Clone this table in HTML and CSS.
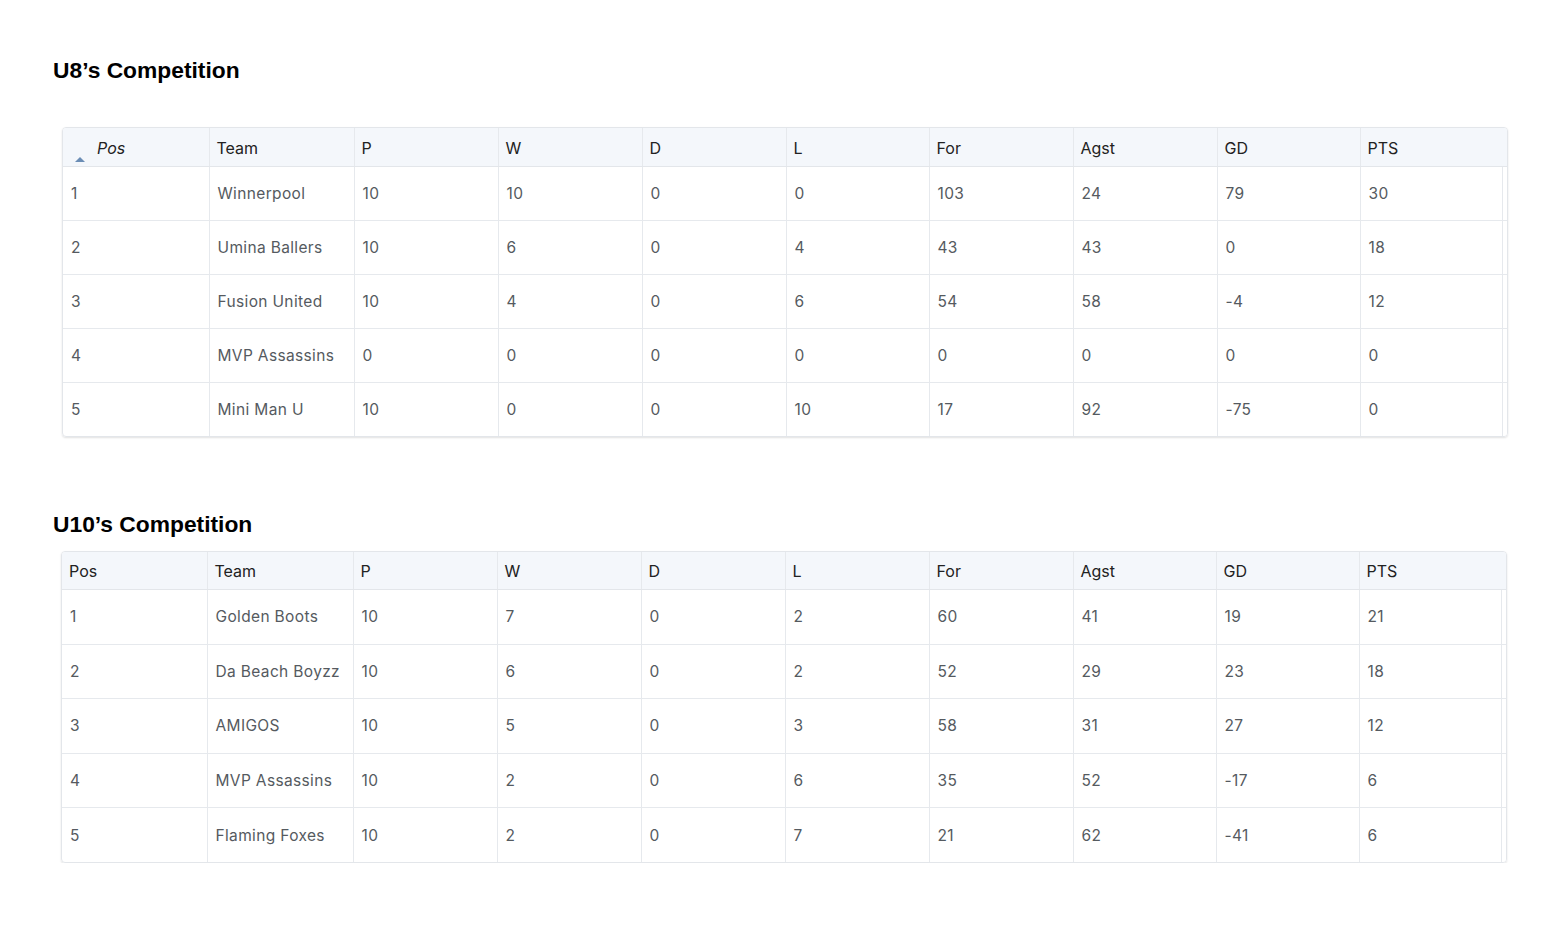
FILE: index.html
```html
<!DOCTYPE html>
<html>
<head>
<meta charset="utf-8">
<link rel="stylesheet" href="styles.css">
</head>
<body>
<main class="page">
  <section class="comp comp-u8">
    <h2 class="title">U8’s Competition</h2>
    <div class="grid-wrap">
      <table class="ladder t1">
        <colgroup><col><col><col><col><col><col><col><col><col><col></colgroup>
        <thead>
          <tr><th class="sorted"><span class="arrow"></span><span class="it">Pos</span></th><th>Team</th><th>P</th><th>W</th><th>D</th><th>L</th><th>For</th><th>Agst</th><th>GD</th><th>PTS</th></tr>
        </thead>
        <tbody>
          <tr><td>1</td><td>Winnerpool</td><td>10</td><td>10</td><td>0</td><td>0</td><td>103</td><td>24</td><td>79</td><td>30</td></tr>
          <tr><td>2</td><td>Umina Ballers</td><td>10</td><td>6</td><td>0</td><td>4</td><td>43</td><td>43</td><td>0</td><td>18</td></tr>
          <tr><td>3</td><td>Fusion United</td><td>10</td><td>4</td><td>0</td><td>6</td><td>54</td><td>58</td><td>-4</td><td>12</td></tr>
          <tr><td>4</td><td>MVP Assassins</td><td>0</td><td>0</td><td>0</td><td>0</td><td>0</td><td>0</td><td>0</td><td>0</td></tr>
          <tr><td>5</td><td>Mini Man U</td><td>10</td><td>0</td><td>0</td><td>10</td><td>17</td><td>92</td><td>-75</td><td>0</td></tr>
        </tbody>
      </table>
    </div>
  </section>

  <section class="comp comp-u10">
    <h2 class="title">U10’s Competition</h2>
    <div class="grid-wrap">
      <table class="ladder t2">
        <colgroup><col><col><col><col><col><col><col><col><col><col></colgroup>
        <thead>
          <tr><th>Pos</th><th>Team</th><th>P</th><th>W</th><th>D</th><th>L</th><th>For</th><th>Agst</th><th>GD</th><th>PTS</th></tr>
        </thead>
        <tbody>
          <tr><td>1</td><td>Golden Boots</td><td>10</td><td>7</td><td>0</td><td>2</td><td>60</td><td>41</td><td>19</td><td>21</td></tr>
          <tr><td>2</td><td>Da Beach Boyzz</td><td>10</td><td>6</td><td>0</td><td>2</td><td>52</td><td>29</td><td>23</td><td>18</td></tr>
          <tr><td>3</td><td>AMIGOS</td><td>10</td><td>5</td><td>0</td><td>3</td><td>58</td><td>31</td><td>27</td><td>12</td></tr>
          <tr><td>4</td><td>MVP Assassins</td><td>10</td><td>2</td><td>0</td><td>6</td><td>35</td><td>52</td><td>-17</td><td>6</td></tr>
          <tr><td>5</td><td>Flaming Foxes</td><td>10</td><td>2</td><td>0</td><td>7</td><td>21</td><td>62</td><td>-41</td><td>6</td></tr>
        </tbody>
      </table>
    </div>
  </section>
</main>
</body>
</html>
```

FILE: styles.css
```css
html, body {
  margin: 0;
  padding: 0;
  background: #ffffff;
}

.page {
  padding: 57px 0 0 53px;
  display: flex;
  flex-direction: column;
}

.title {
  margin: 0;
  font-family: "Liberation Sans", Arial, sans-serif;
  font-weight: 700;
  font-size: 22.8px;
  line-height: 26px;
  color: #000;
}

.comp-u8 .grid-wrap {
  margin: 44px 0 0 9px;
}

.comp-u10 {
  margin-top: 74px;
}

.comp-u10 .grid-wrap {
  margin: 14px 0 0 8px;
}

.grid-wrap {
  width: 1446px;
  box-sizing: border-box;
  border: 1px solid #e3e6ea;
  border-radius: 4px;
  box-shadow: 0 1px 2px rgba(0, 0, 0, 0.12);
  overflow: hidden;
}

.ladder {
  width: 1444px;
  table-layout: fixed;
  border-collapse: collapse;
  border-spacing: 0;
}

.t1 col:nth-child(1) { width: 146px; }
.t1 col:nth-child(2) { width: 145px; }
.t1 col:nth-child(3) { width: 144px; }
.t1 col:nth-child(4) { width: 144px; }
.t1 col:nth-child(5) { width: 144px; }
.t1 col:nth-child(6) { width: 143px; }
.t1 col:nth-child(7) { width: 144px; }
.t1 col:nth-child(8) { width: 144px; }
.t1 col:nth-child(9) { width: 143px; }
.t1 col:nth-child(10) { width: 147px; }

.t2 col:nth-child(1) { width: 145px; }
.t2 col:nth-child(2) { width: 146px; }
.t2 col:nth-child(3) { width: 144px; }
.t2 col:nth-child(4) { width: 144px; }
.t2 col:nth-child(5) { width: 144px; }
.t2 col:nth-child(6) { width: 144px; }
.t2 col:nth-child(7) { width: 144px; }
.t2 col:nth-child(8) { width: 143px; }
.t2 col:nth-child(9) { width: 143px; }
.t2 col:nth-child(10) { width: 147px; }

.ladder th {
  height: 38px;
  padding: 2px 0 0 7px;
  box-sizing: border-box;
  background: #f4f7fb;
  border-bottom: 1px solid #e3e6ea;
  border-left: 1px solid #e6e9ed;
  text-align: left;
  font-family: Inter, "Liberation Sans", sans-serif;
  font-weight: 400;
  font-size: 16px;
  color: #222;
  vertical-align: middle;
  white-space: nowrap;
}

.ladder th:first-child,
.ladder td:first-child {
  border-left: none;
}

.ladder th.sorted {
  padding-left: 12px;
}

.arrow {
  display: inline-block;
  width: 0;
  height: 0;
  border-left: 5px solid transparent;
  border-right: 5px solid transparent;
  border-bottom: 5px solid #6b8db5;
  margin-right: 12px;
  vertical-align: baseline;
  position: relative;
  top: 8px;
}

.it {
  font-style: italic;
}

.ladder td {
  height: 53px;
  padding: 0 0 0 8px;
  border-top: 1px solid #e6e9ed;
  border-left: 1px solid #e6e9ed;
  text-align: left;
  font-family: Inter, "Liberation Sans", sans-serif;
  font-weight: 400;
  font-size: 15.5px;
  letter-spacing: 0.35px;
  color: #555a60;
  vertical-align: middle;
  white-space: nowrap;
}

.t2 td {
  height: 53.6px;
}

.ladder tbody tr:first-child td {
  border-top: none;
}

.ladder td:last-child {
  box-shadow: inset -4px 0 0 #fff, inset -5px 0 0 #e6e9ed;
}
```
